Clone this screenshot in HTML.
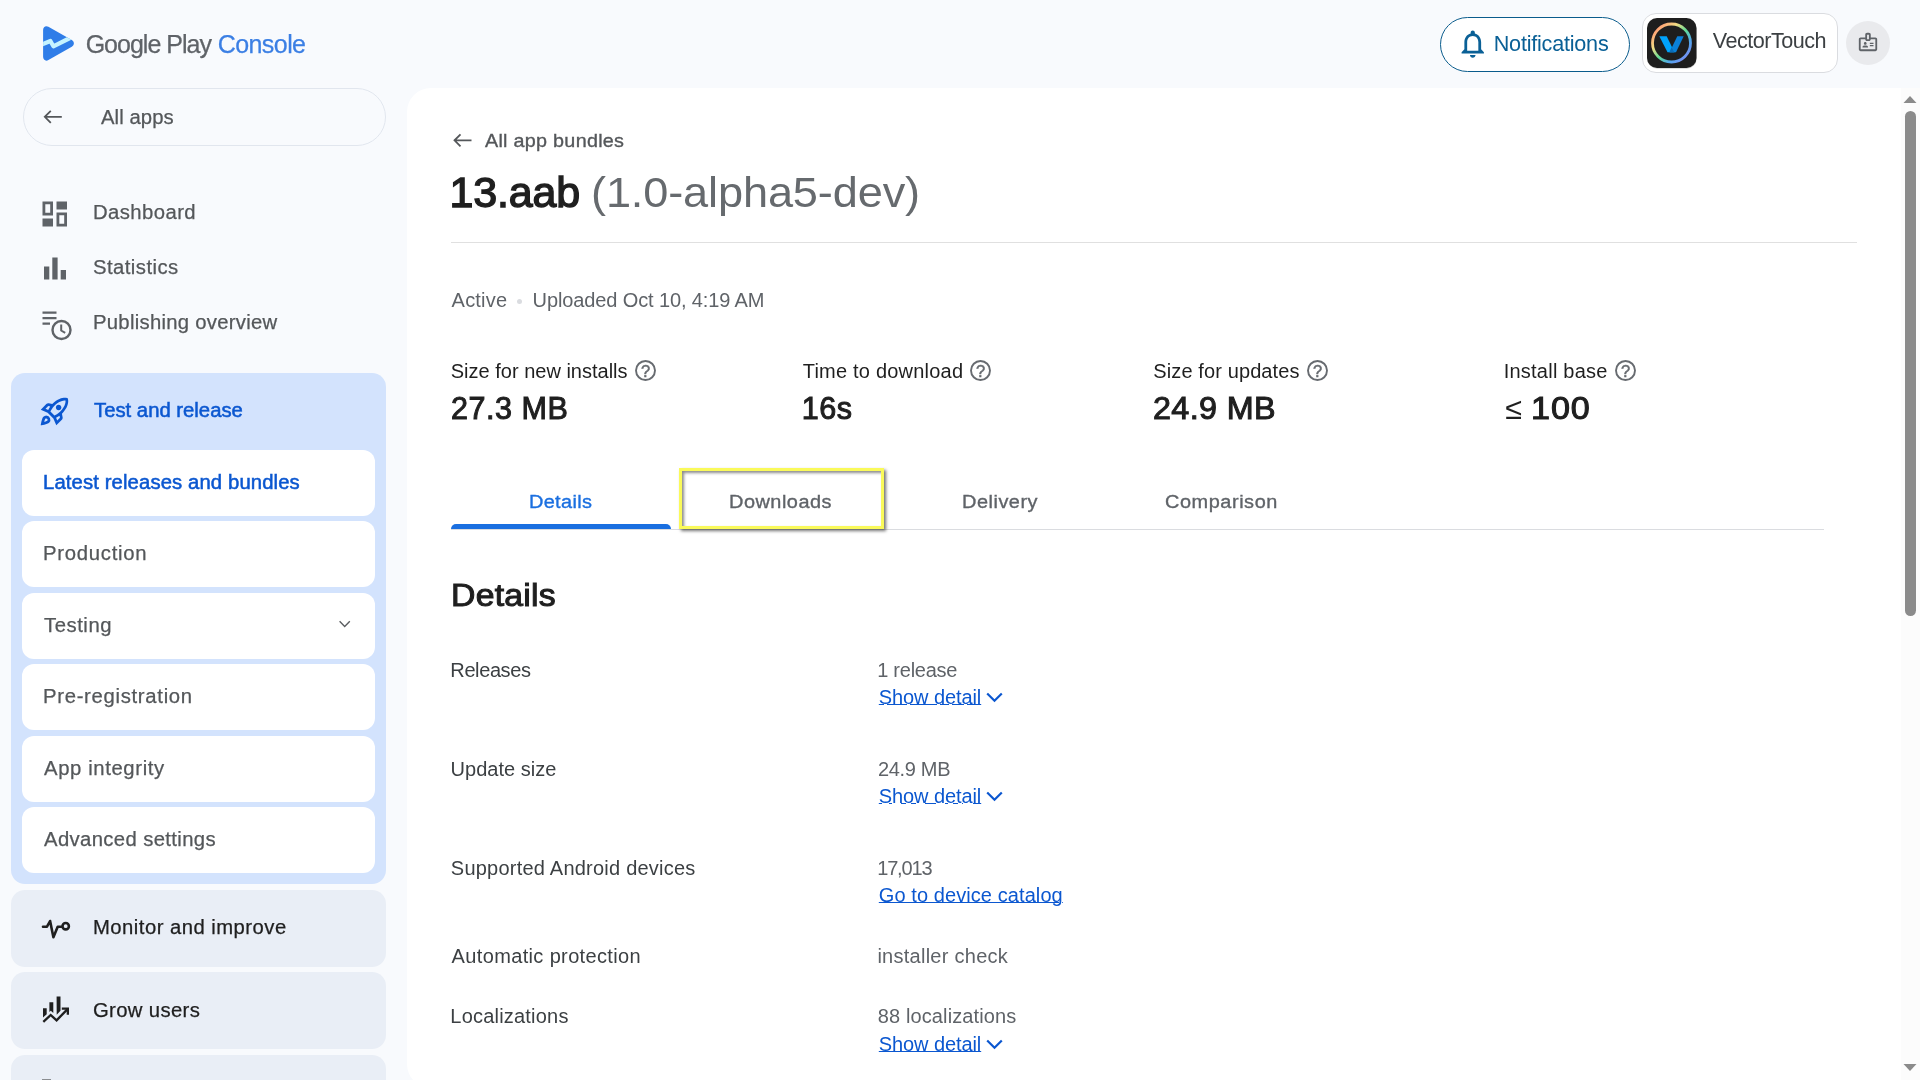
<!DOCTYPE html>
<html lang="en"><head><meta charset="utf-8"><title>Google Play Console</title>
<style>
*{box-sizing:border-box}
html,body{margin:0;padding:0;width:1920px;height:1080px;overflow:hidden}
body{width:1920px;height:1080px;overflow:hidden;position:relative;background:#f8fafd;font-family:"Liberation Sans",sans-serif;color:#1f1f1f}
.t{position:absolute;white-space:nowrap;margin:0;padding:0;transform-origin:0 50%}
.b{position:absolute}
svg{position:absolute;overflow:visible}
.m2{-webkit-text-stroke:1px currentColor}
.m3{-webkit-text-stroke:1.400px currentColor}
.m{-webkit-text-stroke:.5px currentColor}
.s{-webkit-text-stroke:.25px currentColor}
.s2{-webkit-text-stroke:.35px currentColor}
.card{position:absolute;left:22px;width:353px;height:66px;background:#fff;border-radius:12px}
.grp{position:absolute;left:11px;width:375px;background:#e9eef6;border-radius:14px}
a.t{text-decoration:underline;text-underline-offset:.300px;text-decoration-thickness:1.100px}
#w{position:absolute;left:0;top:0;width:1920px;height:1080px;overflow:hidden;will-change:transform}
</style></head><body><div id="w">
<!-- main panel -->
<div class="b" style="left:407px;top:88px;width:1513px;height:1000px;background:#fff;border-radius:24px 0 0 24px"></div>
<!-- scrollbar -->
<div class="b" style="left:1901px;top:88px;width:19px;height:992px;background:#fcfcfc"></div>
<div class="b" style="left:1905px;top:111px;width:11px;height:505px;background:#8b8b8b;border-radius:6px"></div>
<svg style="left:1903px;top:95px" width="14" height="8" viewBox="0 0 14 8"><path d="M0.5 8 L7 1 L13.5 8Z" fill="#8b8b8b"/></svg>
<svg style="left:1903px;top:1064px" width="14" height="8" viewBox="0 0 14 8"><path d="M0.5 0 L7 7 L13.5 0Z" fill="#8b8b8b"/></svg>

<!-- logo -->
<svg style="left:42px;top:25px" width="33" height="37" viewBox="0 0 33 37">
<defs><clipPath id="lc"><path d="M1.100 5 C1.100 1.800 3.800 0.200 6.400 1.700 L29.800 15 C32.600 16.600 32.600 20.200 29.800 21.800 L6.400 35.100 C3.800 36.500 1.100 35 1.100 31.800Z"/></clipPath></defs>
<path d="M1.100 5 C1.100 1.800 3.800 0.200 6.400 1.700 L29.800 15 C32.600 16.600 32.600 20.200 29.800 21.800 L6.400 35.100 C3.800 36.500 1.100 35 1.100 31.800Z" fill="#2f7de8"/>
<path d="M-2 20.300 L8.400 16 L11.400 21.300 L31 11.500" fill="none" stroke="#c4f3ff" stroke-width="4.200" stroke-linejoin="round" clip-path="url(#lc)"/>
</svg>

<!-- all apps pill -->
<div class="b" style="left:23px;top:88px;width:363px;height:58px;border:1.500px solid #e1e6ee;border-radius:29px"></div>
<svg style="left:41px;top:106px" width="24" height="22" viewBox="41 106 24 22"><path d="M61.800 116.800H44.800M50.800 110.800l-6 6 6 6" fill="none" stroke="#54575a" stroke-width="1.800"/></svg>

<!-- sidebar icons -->
<svg style="left:42.200px;top:200.600px" width="26" height="26" viewBox="0 0 26 26" fill="#5f6368">
<path d="M0.5 0.5h10.5v14H0.5zM3.3 3.3v8.4h4.9V3.3z" fill-rule="evenodd"/>
<rect x="14.5" y="0.5" width="10.5" height="8"/>
<rect x="0.5" y="17.5" width="10.5" height="8"/>
<path d="M14.5 11.500h10.5v14H14.5zM17.3 14.300v8.400h4.900v-8.400z" fill-rule="evenodd"/>
</svg>
<svg style="left:44px;top:257px" width="23" height="23" viewBox="0 0 23 23" fill="#5f6368">
<rect x="0" y="9.500" width="5.300" height="13"/><rect x="8.300" y="0.500" width="5.300" height="22"/><rect x="16.700" y="13" width="5.300" height="9.500"/>
</svg>
<svg style="left:42px;top:311px" width="30" height="30" viewBox="0 0 30 30">
<path d="M0.500 0.500h14v2.300H0.500zM0.500 6h14v2.300H0.500zM0.500 11.500h7.500v2.300H0.500z" fill="#5f6368"/>
<circle cx="19.500" cy="19" r="9" fill="none" stroke="#5f6368" stroke-width="2.400"/>
<path d="M19.200 13.500v6l4 2.400" fill="none" stroke="#5f6368" stroke-width="2"/>
</svg>

<!-- Test and release group -->
<div class="grp" style="top:373px;height:511px;background:#d3e3fd"></div>
<svg style="left:38px;top:394.500px" width="33" height="33" viewBox="0 0 24 24"><path fill="#0b57d0" d="M6 15c-.83 0-1.58.34-2.12.88C2.700 17.060 2 22 2 22s4.940-.7 6.120-1.880A2.996 2.996 0 0 0 6 15zm.710 3.710c-.280.280-2.170.760-2.170.760s.470-1.880.760-2.170c.170-.190.420-.3.700-.3a1.003 1.003 0 0 1 .710 1.710zm10.710-5.060c6.360-6.360 4.240-11.310 4.240-11.310s-4.950-2.120-11.310 4.240l-2.490-.5a2.030 2.030 0 0 0-1.810.550L2 10.690l5 2.140L11.170 17l2.140 5 4.050-4.050c.470-.470.680-1.150.550-1.810l-.490-2.490zM7.410 10.830l-1.910-.820 1.970-1.970 1.440.290c-.570.830-1.080 1.700-1.500 2.500zm6.580 7.670-.820-1.910c.8-.420 1.670-.930 2.490-1.500l.290 1.440-1.960 1.970zM16 12.240c-1.320 1.320-3.380 2.400-4.040 2.730l-2.930-2.930c.320-.650 1.400-2.710 2.730-4.040 4.680-4.680 8.230-3.990 8.230-3.990s.690 3.550-3.990 8.230zM15 11c1.100 0 2-.9 2-2s-.9-2-2-2-2 .9-2 2 .9 2 2 2z"/></svg>
<div class="card" style="top:450px"></div>
<div class="card" style="top:521px"></div>
<div class="card" style="top:593px"></div>
<div class="card" style="top:664px"></div>
<div class="card" style="top:736px"></div>
<div class="card" style="top:807px"></div>
<svg style="left:336px;top:617px" width="17" height="14" viewBox="336 617 17 14"><path d="M339.600 621.300 344.700 626.400 349.800 621.300" fill="none" stroke="#5a5d60" stroke-width="1.400"/></svg>

<!-- Monitor / Grow groups -->
<div class="grp" style="top:890px;height:77px"></div>
<div class="grp" style="top:972px;height:77px"></div>
<div class="grp" style="top:1055px;height:77px"></div>
<svg style="left:38px;top:915px" width="36" height="28" viewBox="38 915 36 28" fill="none" stroke="#1f1f1f" stroke-width="2.600" stroke-linecap="round" stroke-linejoin="round">
<path d="M43 926.700h4l3.100 -5.700 3.300 16.200 4.300 -10.500h3.800"/>
<circle cx="65.700" cy="926.200" r="3.200"/>
</svg>
<svg style="left:40px;top:994px" width="32" height="32" viewBox="40 994 32 32" fill="#1f1f1f">
<path d="M43 1008.200h3.700v6l-3.700 3.400zM49.400 1002.300h3.900v10.600l-2.500 -2.200 -1.400 1.300zM56.600 996.500h3.900v14.300l-3.800 3.900z"/>
<path d="M43.300 1021.900 50.700 1015 56.600 1020.300 67.300 1009.400" fill="none" stroke="#1f1f1f" stroke-width="2.300"/>
<path d="M61.800 1007.500h7.200v7.200h-2.300v-4.900h-4.900z"/>
</svg>
<div class="b" style="left:42px;top:1079px;width:9px;height:1px;background:#8a8d91"></div>

<!-- header right -->
<div class="b" style="left:1440px;top:17px;width:190px;height:55px;border:1.500px solid #0a5c8c;border-radius:28px;background:#fff"></div>
<svg style="left:1456px;top:26.500px" width="33.500" height="33.500" viewBox="0 0 24 24"><path fill="#0a6096" d="M12 22c1.100 0 2-.9 2-2h-4c0 1.100.9 2 2 2zm6-6v-5c0-3.070-1.630-5.640-4.500-6.320V4c0-.830-.670-1.500-1.500-1.500s-1.500.670-1.500 1.500v.680C7.640 5.360 6 7.920 6 11v5l-2 2v1h16v-1l-2-2zm-2 1H8v-6c0-2.480 1.510-4.500 4-4.500s4 2.020 4 4.500v6z"/></svg>
<div class="b" style="left:1642px;top:13px;width:196px;height:60px;border:1px solid #dadce0;border-radius:14px;background:#fff"></div>
<svg style="left:1647px;top:18px" width="50" height="50" viewBox="0 0 50 50">
<defs><linearGradient id="rg" x1="0" y1="0" x2="1" y2="1"><stop offset=".1" stop-color="#ff9a72"/><stop offset=".32" stop-color="#f3dc84"/><stop offset=".52" stop-color="#62dc94"/><stop offset=".72" stop-color="#52a6ec"/><stop offset=".92" stop-color="#7d8cf6"/></linearGradient></defs>
<rect x="0.300" y="0.800" width="49.400" height="50" rx="10" fill="#000" opacity=".18"/><rect x="0" y="0" width="49.500" height="50" rx="10" fill="#1e1e1e"/>
<circle cx="24.500" cy="25" r="19" fill="none" stroke="url(#rg)" stroke-width="2.800"/>
<path d="M30.300 18.300h6.400l-7.700 16h-6.500z" fill="#0a80d8"/>
<path d="M12.300 18.300h7.400l7.800 16h-7z" fill="#00a2fb"/>
<path d="M22.300 34.300l2.400 -5.300 2.800 5.300z" fill="#0b6cb8"/>
</svg>
<div class="b" style="left:1846px;top:21px;width:44px;height:44px;border-radius:22px;background:#e9eaed"></div>
<svg style="left:1857px;top:31px" width="22" height="22" viewBox="0 0 24 24"><path fill="#5f6368" d="M20 7h-5V4c0-1.100-.9-2-2-2h-2c-1.100 0-2 .9-2 2v3H4c-1.100 0-2 .9-2 2v11c0 1.100.9 2 2 2h16c1.100 0 2-.9 2-2V9c0-1.100-.9-2-2-2zm-9-3h2v5h-2V4zm9 16H4V9h5c0 1.100.9 2 2 2h2c1.100 0 2-.9 2-2h5v11zM9 15c.830 0 1.500-.670 1.500-1.500S9.830 12 9 12s-1.500.670-1.500 1.500S8.170 15 9 15zm2.080 1.180c-.640-.280-1.340-.430-2.080-.430s-1.440.150-2.080.430C6.360 16.420 6 16.960 6 17.570V18h6v-.430c0-.610-.360-1.150-.920-1.390zM14 12.750h4v1.500h-4zm0 2.500h4v1.500h-4z"/></svg>

<!-- main content shapes -->
<svg style="left:450px;top:130px" width="24" height="20" viewBox="450 130 24 20"><path d="M471.500 140.300H454.500M460.500 134.300l-6 6 6 6" fill="none" stroke="#54575a" stroke-width="1.800"/></svg>
<div class="b" style="left:451px;top:242px;width:1406px;height:1px;background:#e0e0e0"></div>
<div class="b" style="left:517px;top:299px;width:5px;height:5px;border-radius:3px;background:#dadce0"></div>
<!-- tabs -->
<div class="b" style="left:451px;top:529px;width:1373px;height:1px;background:#dadce0"></div>
<div class="b" style="left:451px;top:524px;width:220px;height:5px;background:#1a6fe0;border-radius:5px 5px 0 0"></div>
<div class="b" style="left:679px;top:468px;width:204.500px;height:61px;border:3px solid #fafa5a;box-shadow:2px 2px 3px rgba(0,0,0,.55),inset 2px 2px 3px rgba(0,0,0,.45)"></div>
<svg style="left:634.0px;top:359.0px" width="23" height="23" viewBox="0 0 23 23"><circle cx="11.500" cy="11.500" r="9.500" fill="none" stroke="#676b70" stroke-width="1.900"/><text x="11.500" y="17.600" text-anchor="middle" font-family="Liberation Sans, sans-serif" font-size="16.500" fill="#676b70" stroke="#676b70" stroke-width=".5">?</text></svg>
<svg style="left:968.5px;top:359.0px" width="23" height="23" viewBox="0 0 23 23"><circle cx="11.500" cy="11.500" r="9.500" fill="none" stroke="#676b70" stroke-width="1.900"/><text x="11.500" y="17.600" text-anchor="middle" font-family="Liberation Sans, sans-serif" font-size="16.500" fill="#676b70" stroke="#676b70" stroke-width=".5">?</text></svg>
<svg style="left:1305.5px;top:359.0px" width="23" height="23" viewBox="0 0 23 23"><circle cx="11.500" cy="11.500" r="9.500" fill="none" stroke="#676b70" stroke-width="1.900"/><text x="11.500" y="17.600" text-anchor="middle" font-family="Liberation Sans, sans-serif" font-size="16.500" fill="#676b70" stroke="#676b70" stroke-width=".5">?</text></svg>
<svg style="left:1613.5px;top:359.0px" width="23" height="23" viewBox="0 0 23 23"><circle cx="11.500" cy="11.500" r="9.500" fill="none" stroke="#676b70" stroke-width="1.900"/><text x="11.500" y="17.600" text-anchor="middle" font-family="Liberation Sans, sans-serif" font-size="16.500" fill="#676b70" stroke="#676b70" stroke-width=".5">?</text></svg>
<svg style="left:986px;top:691.5px" width="17" height="11" viewBox="0 0 17 11"><path d="M1.200 1.500 8.500 8.800 15.800 1.500" fill="none" stroke="#0b57d0" stroke-width="2.200"/></svg>
<svg style="left:986px;top:790.5px" width="17" height="11" viewBox="0 0 17 11"><path d="M1.200 1.500 8.500 8.800 15.800 1.500" fill="none" stroke="#0b57d0" stroke-width="2.200"/></svg>
<svg style="left:986px;top:1038.5px" width="17" height="11" viewBox="0 0 17 11"><path d="M1.200 1.500 8.500 8.800 15.800 1.500" fill="none" stroke="#0b57d0" stroke-width="2.200"/></svg>
<div class="t s" style="left:85.66px;top:28.3px;font-size:25px;line-height:32px;color:#5f6368;letter-spacing:-0.993px">Google Play</div>
<div class="t s" style="left:217.68px;top:28.3px;font-size:25px;line-height:32px;color:#3b7fe4;letter-spacing:-0.562px">Console</div>
<div class="t s" style="left:101.14px;top:104.7px;font-size:19.5px;line-height:25px;color:#54575a;letter-spacing:0.066px;transform:scaleX(1.04)">All apps</div>
<div class="t s" style="left:92.82px;top:199.7px;font-size:19.5px;line-height:25px;color:#54575a;letter-spacing:0.407px;transform:scaleX(1.04)">Dashboard</div>
<div class="t s" style="left:92.61px;top:254.7px;font-size:19.5px;line-height:25px;color:#54575a;letter-spacing:0.428px;transform:scaleX(1.04)">Statistics</div>
<div class="t s" style="left:92.79px;top:309.7px;font-size:19.5px;line-height:25px;color:#54575a;letter-spacing:0.264px;transform:scaleX(1.04)">Publishing overview</div>
<div class="t m" style="left:94.11px;top:398.0px;font-size:19.5px;line-height:25px;color:#0b57d0;letter-spacing:0.003px;transform:scaleX(1.04)">Test and release</div>
<div class="t m" style="left:42.54px;top:470.2px;font-size:19.5px;line-height:25px;color:#0b57d0;letter-spacing:0.113px;transform:scaleX(1.04)">Latest releases and bundles</div>
<div class="t s" style="left:42.79px;top:541.2px;font-size:19.5px;line-height:25px;color:#54575a;letter-spacing:0.714px;transform:scaleX(1.04)">Production</div>
<div class="t s" style="left:43.60px;top:612.7px;font-size:19.5px;line-height:25px;color:#54575a;letter-spacing:0.517px;transform:scaleX(1.04)">Testing</div>
<div class="t s" style="left:42.79px;top:684.2px;font-size:19.5px;line-height:25px;color:#54575a;letter-spacing:0.670px;transform:scaleX(1.04)">Pre-registration</div>
<div class="t s" style="left:44.14px;top:755.7px;font-size:19.5px;line-height:25px;color:#54575a;letter-spacing:0.594px;transform:scaleX(1.04)">App integrity</div>
<div class="t s" style="left:44.14px;top:827.2px;font-size:19.5px;line-height:25px;color:#54575a;letter-spacing:0.356px;transform:scaleX(1.04)">Advanced settings</div>
<div class="t s" style="left:92.73px;top:914.7px;font-size:19.5px;line-height:25px;color:#1f1f1f;letter-spacing:0.444px;transform:scaleX(1.04)">Monitor and improve</div>
<div class="t s" style="left:92.61px;top:997.7px;font-size:19.5px;line-height:25px;color:#1f1f1f;letter-spacing:0.337px;transform:scaleX(1.04)">Grow users</div>
<div class="t" style="left:1493.74px;top:29.5px;font-size:21.6px;line-height:28px;color:#0a6096;letter-spacing:-0.221px">Notifications</div>
<div class="t" style="left:1712.77px;top:26.5px;font-size:21.6px;line-height:28px;color:#3c4043;letter-spacing:-0.514px">VectorTouch</div>
<div class="t s2" style="left:485.43px;top:127.9px;font-size:19px;line-height:25px;color:#54575a;letter-spacing:0.264px;transform:scaleX(1.04)">All app bundles</div>
<div class="t m3" style="left:449.42px;top:163.7px;font-size:43px;line-height:56px;color:#1f1f1f;letter-spacing:-0.161px">13.aab</div>
<div class="t" style="left:591.08px;top:163.7px;font-size:43px;line-height:56px;color:#666a6e;letter-spacing:-0.137px;transform:scaleX(1.05)">(1.0-alpha5-dev)</div>
<div class="t" style="left:451.62px;top:287.1px;font-size:20px;line-height:26px;color:#5f6368;letter-spacing:0.196px">Active</div>
<div class="t" style="left:532.58px;top:287.1px;font-size:20px;line-height:26px;color:#5f6368;letter-spacing:-0.118px">Uploaded Oct 10, 4:19 AM</div>
<div class="t" style="left:450.78px;top:358.4px;font-size:20px;line-height:26px;color:#1f1f1f;letter-spacing:0.001px">Size for new installs</div>
<div class="t" style="left:802.69px;top:358.4px;font-size:20px;line-height:26px;color:#1f1f1f;letter-spacing:0.218px">Time to download</div>
<div class="t" style="left:1153.26px;top:358.4px;font-size:20px;line-height:26px;color:#1f1f1f;letter-spacing:0.116px">Size for updates</div>
<div class="t" style="left:1503.72px;top:358.4px;font-size:20px;line-height:26px;color:#1f1f1f;letter-spacing:0.227px">Install base</div>
<div class="t m2" style="left:451.08px;top:387.6px;font-size:30.5px;line-height:40px;color:#1f1f1f;letter-spacing:0.528px">27.3 MB</div>
<div class="t m2" style="left:801.86px;top:387.6px;font-size:30.5px;line-height:40px;color:#1f1f1f;letter-spacing:0.490px">16s</div>
<div class="t m2" style="left:1153.44px;top:387.6px;font-size:30.5px;line-height:40px;color:#1f1f1f;letter-spacing:0.354px;transform:scaleX(1.06)">24.9 MB</div>
<div class="t" style="left:1505.23px;top:387.6px;font-size:30.5px;line-height:40px;color:#1f1f1f;letter-spacing:0.000px">≤</div>
<div class="t m2" style="left:1530.82px;top:387.6px;font-size:30.5px;line-height:40px;color:#1f1f1f;letter-spacing:0.790px;transform:scaleX(1.12)">100</div>
<div class="t s2" style="left:529.01px;top:489.9px;font-size:18.8px;line-height:24px;color:#1a6fe0;letter-spacing:0.317px;transform:scaleX(1.06)">Details</div>
<div class="t s2" style="left:729.02px;top:489.9px;font-size:18.8px;line-height:24px;color:#5f6368;letter-spacing:0.473px;transform:scaleX(1.06)">Downloads</div>
<div class="t s2" style="left:962.02px;top:489.9px;font-size:18.8px;line-height:24px;color:#5f6368;letter-spacing:0.494px;transform:scaleX(1.06)">Delivery</div>
<div class="t s2" style="left:1164.61px;top:489.9px;font-size:18.8px;line-height:24px;color:#5f6368;letter-spacing:0.525px;transform:scaleX(1.06)">Comparison</div>
<div class="t m2" style="left:450.82px;top:576.3px;font-size:31px;line-height:40px;color:#1f1f1f;letter-spacing:0.225px;transform:scaleX(1.09)">Details</div>
<div class="t" style="left:450.37px;top:656.9px;font-size:20px;line-height:26px;color:#3c4043;letter-spacing:-0.401px">Releases</div>
<div class="t" style="left:450.56px;top:755.9px;font-size:20px;line-height:26px;color:#3c4043;letter-spacing:0.028px">Update size</div>
<div class="t" style="left:450.87px;top:854.9px;font-size:20px;line-height:26px;color:#3c4043;letter-spacing:0.225px">Supported Android devices</div>
<div class="t" style="left:451.59px;top:943.4px;font-size:20px;line-height:26px;color:#3c4043;letter-spacing:0.357px">Automatic protection</div>
<div class="t" style="left:450.37px;top:1003.3px;font-size:20px;line-height:26px;color:#3c4043;letter-spacing:0.203px">Localizations</div>
<div class="t" style="left:877.22px;top:656.9px;font-size:20px;line-height:26px;color:#5f6368;letter-spacing:-0.264px">1 release</div>
<a class="t" style="left:878.81px;top:683.7px;font-size:20px;line-height:26px;color:#0b57d0;letter-spacing:-0.092px">Show detail</a>
<div class="t" style="left:877.88px;top:755.9px;font-size:20px;line-height:26px;color:#5f6368;letter-spacing:-0.304px">24.9 MB</div>
<a class="t" style="left:878.81px;top:782.5px;font-size:20px;line-height:26px;color:#0b57d0;letter-spacing:-0.092px">Show detail</a>
<div class="t" style="left:877.22px;top:854.9px;font-size:20px;line-height:26px;color:#5f6368;letter-spacing:-1.177px">17,013</div>
<a class="t" style="left:878.81px;top:882.1px;font-size:20px;line-height:26px;color:#0b57d0;letter-spacing:0.083px">Go to device catalog</a>
<div class="t" style="left:877.40px;top:943.4px;font-size:20px;line-height:26px;color:#5f6368;letter-spacing:0.264px">installer check</div>
<div class="t" style="left:877.75px;top:1003.3px;font-size:20px;line-height:26px;color:#5f6368;letter-spacing:0.120px">88 localizations</div>
<a class="t" style="left:878.81px;top:1030.9px;font-size:20px;line-height:26px;color:#0b57d0;letter-spacing:-0.092px">Show detail</a>
</div></body></html>
